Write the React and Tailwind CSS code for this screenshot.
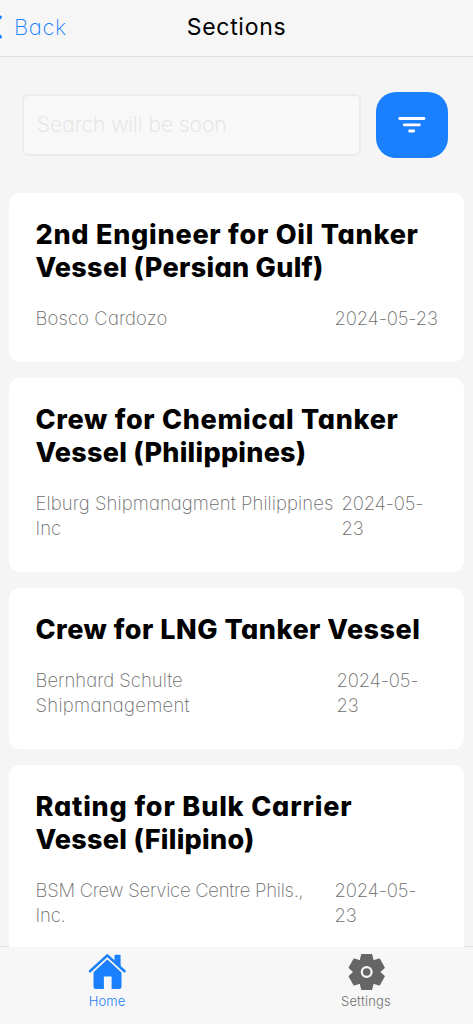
const listings = [
  {
    title: [["2nd Engineer for Oil Tanker", "tracking-[0.75px]"], ["Vessel (Persian Gulf)", "tracking-[0.3px]"]],
    company: [["Bosco Cardozo", "tracking-[0.1px]"]],
    date: ["2024-05-23"],
    height: "h-[169px]",
    gap: "mt-[21px]",
    dateWidth: "w-[103px]",
  },
  {
    title: [["Crew for Chemical Tanker", "tracking-[0.68px]"], ["Vessel (Philippines)", "tracking-[0.25px]"]],
    company: [["Elburg Shipmanagment Philippines", "tracking-[0.07px]"], ["Inc", "tracking-[0px]"]],
    date: ["2024-05-", "23"],
    height: "h-[194px]",
    gap: "mt-[21px]",
    dateWidth: "w-[96px]",
  },
  {
    title: [["Crew for LNG Tanker Vessel", "tracking-[0.5px]"]],
    company: [["Bernhard Schulte", "tracking-[0px]"], ["Shipmanagement", "tracking-[0.28px]"]],
    date: ["2024-05-", "23"],
    height: "h-[161px]",
    gap: "mt-[22px]",
    dateWidth: "w-[101px]",
  },
  {
    title: [["Rating for Bulk Carrier", "tracking-[0.84px]"], ["Vessel (Filipino)", "tracking-[0.28px]"]],
    company: [["BSM Crew Service Centre Phils.,", "tracking-[-0.27px]"], ["Inc.", "tracking-[-0.2px]"]],
    date: ["2024-05-", "23"],
    height: "h-[195px]",
    gap: "mt-[21px]",
    dateWidth: "w-[103px]",
  },
];

function Card({ item }) {
  return (
    <article className={`shrink-0 rounded-[11px] bg-white pl-[26.5px] pr-[26.5px] pt-[25px] ${item.height}`}>
      <h2 className="text-[27px] font-extrabold leading-[33.3px] text-black">
        {item.title.map(([text, tracking]) => (
          <span key={text} className={`block whitespace-nowrap ${tracking}`}>{text}</span>
        ))}
      </h2>
      <div className={`flex justify-between text-[18.5px] font-extralight leading-[25px] text-[#6c6c6c] ${item.gap}`}>
        <div>
          {item.company.map(([text, tracking]) => (
            <span key={text} className={`block whitespace-nowrap ${tracking}`}>{text}</span>
          ))}
        </div>
        <div className={`shrink-0 tracking-[-0.2px] ${item.dateWidth}`}>
          {item.date.map((text) => (
            <span key={text} className="block whitespace-nowrap">{text}</span>
          ))}
        </div>
      </div>
    </article>
  );
}

export default function App() {
  return (
    <div className="flex h-[1024px] w-[473px] flex-col overflow-hidden bg-[#f5f5f5] font-['Inter','Open_Sans',sans-serif] [font-feature-settings:'cv11']">
      <header className="grid h-[57px] shrink-0 grid-cols-[1fr_auto_1fr] items-center border-b border-[#dedede] bg-[#f6f6f6] pb-[2px]">
        <div className="flex items-center">
          <svg className="mr-[11px] h-6 w-[3px]" viewBox="0 0 3 24" fill="none" stroke="#1a80fd" strokeWidth="3" strokeLinecap="round">
            <path d="M0.5 2L-9 12L0.5 22" />
          </svg>
          <span className="text-[22px] font-extralight tracking-[0.6px] text-[#1a80fd]">Back</span>
        </div>
        <h1 className="text-[23px] font-normal tracking-[0.7px] text-black">Sections</h1>
      </header>
      <main className="relative z-10 -mb-px flex min-h-0 flex-1 flex-col overflow-hidden">
        <div className="flex shrink-0 items-center gap-[15px] pb-[35px] pl-[22px] pr-[25px] pt-[35px]">
          <div className="flex h-[62px] w-[339px] items-center rounded-[6px] border-2 border-[#ececec] bg-[#f8f8f8] pl-[13px] text-[21px] font-extralight tracking-[0.02px] text-[#e2e2e2]">
            Search will be soon
          </div>
          <button className="flex h-[66px] w-[72px] items-center justify-center rounded-[20px] bg-[#1a80fd]" aria-label="Filter">
            <svg width="28" height="18" viewBox="0 0 28 18" fill="none" stroke="#fff" strokeWidth="2.8" strokeLinecap="round">
              <path d="M1.7 2.5H26M6.2 8.8H21.4M11.6 15H15.8" />
            </svg>
          </button>
        </div>
        <div className="flex flex-col gap-4 px-[9px]">
          {listings.map((item) => <Card key={item.title[0][0]} item={item} />)}
        </div>
      </main>
      <nav className="flex h-[78px] shrink-0 justify-between border-t border-[#e2e2e2] bg-[#f7f7f7] px-[57px] pt-[6px]">
        <div className="flex w-[100px] flex-col items-center text-[13px] font-light text-[#1a80fd]">
          <svg width="40" height="38" viewBox="0 0 40 38" fill="#1a80fd">
            <path d="M27.5 2.8Q27.5 1.8 28.5 1.8H32.6Q33.6 1.8 33.6 2.8V15L27.5 9Z" />
            <path d="M20.3 5.5L34.5 19V33.5Q34.5 36 32 36H24.6V23.5H16.9V36H9Q6.5 36 6.5 33.5V19Z" />
            <path d="M3 20.6L20.3 4.9L37.6 20.6" fill="none" stroke="#f7f7f7" strokeWidth="2.4" />
            <path d="M3 18.2L20.3 2.4L37.6 18.2" fill="none" stroke="#1a80fd" strokeWidth="2.6" strokeLinecap="round" strokeLinejoin="round" />
          </svg>
          <span className="mt-[2px] leading-4 tracking-[0.1px]">Home</span>
        </div>
        <div className="flex w-[100px] flex-col items-center text-[13px] font-light tracking-[0.2px] text-[#707070]">
          <svg width="38" height="38" viewBox="-19.7 -19 38 38">
            <g fill="#666" stroke="#666" strokeWidth="1.6" strokeLinejoin="round">
              <circle r="12.3" />
              <path d="M-6.4 -10.5L-4.8 -17.2H4.8L6.4 -10.5Z" />
              <path d="M-6.4 -10.5L-4.8 -17.2H4.8L6.4 -10.5Z" transform="rotate(60)" />
              <path d="M-6.4 -10.5L-4.8 -17.2H4.8L6.4 -10.5Z" transform="rotate(120)" />
              <path d="M-6.4 -10.5L-4.8 -17.2H4.8L6.4 -10.5Z" transform="rotate(180)" />
              <path d="M-6.4 -10.5L-4.8 -17.2H4.8L6.4 -10.5Z" transform="rotate(240)" />
              <path d="M-6.4 -10.5L-4.8 -17.2H4.8L6.4 -10.5Z" transform="rotate(300)" />
            </g>
            <circle r="4.9" fill="#666" stroke="#f7f7f7" strokeWidth="2.2" />
          </svg>
          <span className="mt-[2px] leading-4">Settings</span>
        </div>
      </nav>
    </div>
  );
}
